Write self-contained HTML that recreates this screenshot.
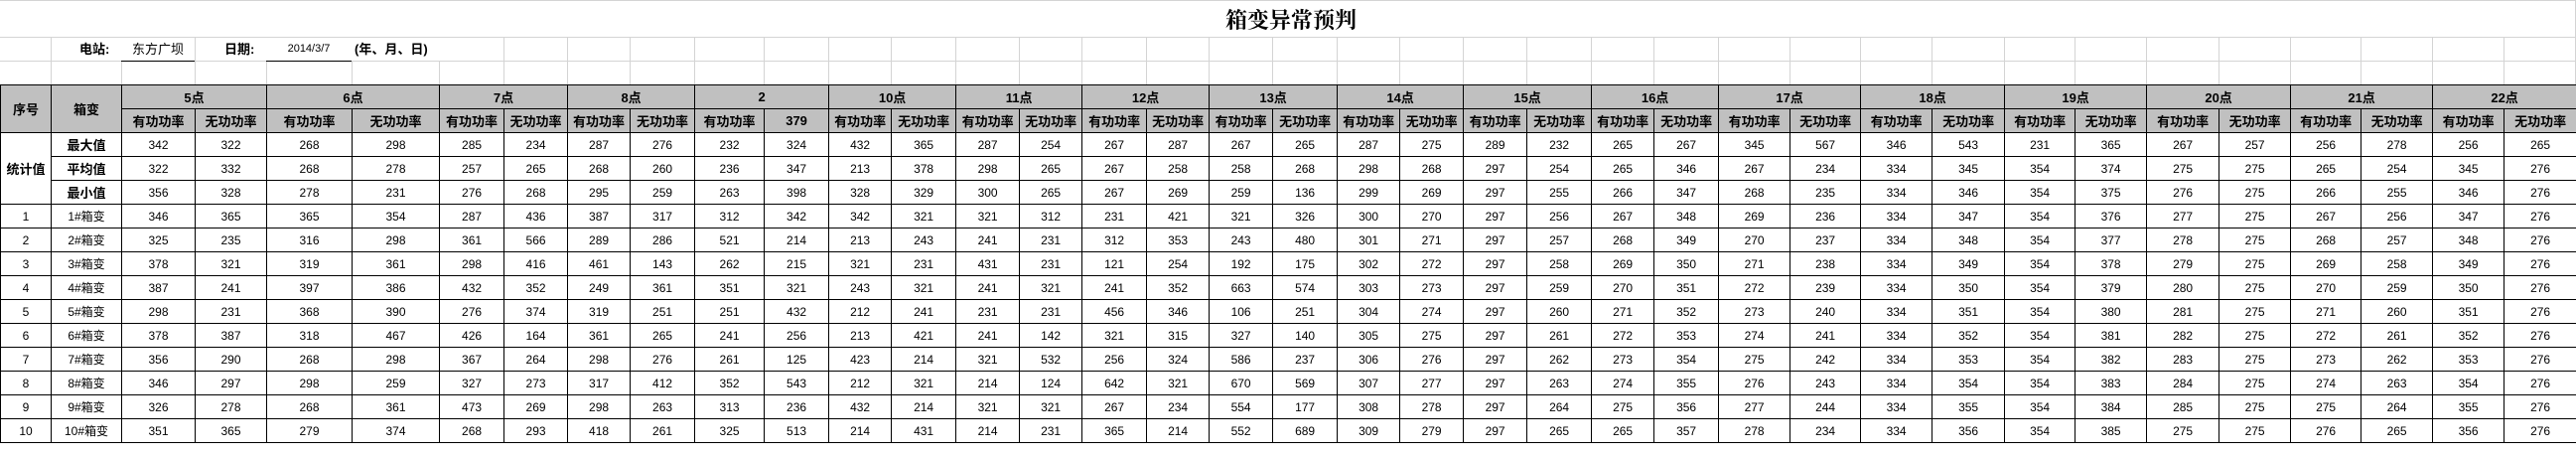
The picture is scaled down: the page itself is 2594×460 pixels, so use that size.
<!DOCTYPE html>
<html><head><meta charset="utf-8">
<style>
html,body{margin:0;padding:0;background:#fff;}
body{width:2594px;height:460px;position:relative;overflow:hidden;font-family:"Liberation Sans","Noto Sans CJK SC",sans-serif;}
.gl{position:absolute;background:#d4d4d4;}
.t{position:absolute;font-size:13px;line-height:24px;white-space:nowrap;}
table{position:absolute;left:0;top:85px;border-collapse:collapse;table-layout:fixed;width:2594px;}
td{border:1px solid #000;height:23px;padding:0;text-align:center;font-size:12px;color:#000;overflow:hidden;white-space:nowrap;}
thead td{background:#c0c0c0;font-weight:bold;font-size:13px;}
td.b{font-weight:bold;font-size:13px;}
</style></head><body>
<!-- title area gridlines -->
<div class="gl" style="left:0;top:0;width:2594px;height:1px"></div>
<div class="gl" style="left:0;top:37px;width:2594px;height:1px"></div>
<div class="gl" style="left:0;top:61px;width:2594px;height:1px"></div>
<div class="gl" style="left:2593px;top:0;width:1px;height:85px"></div>
<div style="position:absolute;left:1100px;width:400px;top:4px;text-align:center;font-size:22px;font-weight:bold;font-family:'Liberation Serif','Noto Serif CJK SC',serif;">箱变异常预判</div>
<!-- gridlines rows 2-3 -->
<div class="gl" style="left:51px;top:37px;width:1px;height:48px"></div>
<div class="gl" style="left:122px;top:61px;width:1px;height:24px"></div>
<div class="gl" style="left:196px;top:37px;width:1px;height:48px"></div>
<div class="gl" style="left:268px;top:61px;width:1px;height:24px"></div>
<div class="gl" style="left:354px;top:61px;width:1px;height:24px"></div>
<div class="gl" style="left:442px;top:61px;width:1px;height:24px"></div>
<div class="gl" style="left:507px;top:37px;width:1px;height:48px"></div>
<div class="gl" style="left:571px;top:37px;width:1px;height:48px"></div>
<div class="gl" style="left:634px;top:37px;width:1px;height:48px"></div>
<div class="gl" style="left:699px;top:37px;width:1px;height:48px"></div>
<div class="gl" style="left:769px;top:37px;width:1px;height:48px"></div>
<div class="gl" style="left:834px;top:37px;width:1px;height:48px"></div>
<div class="gl" style="left:897px;top:37px;width:1px;height:48px"></div>
<div class="gl" style="left:962px;top:37px;width:1px;height:48px"></div>
<div class="gl" style="left:1026px;top:37px;width:1px;height:48px"></div>
<div class="gl" style="left:1089px;top:37px;width:1px;height:48px"></div>
<div class="gl" style="left:1154px;top:37px;width:1px;height:48px"></div>
<div class="gl" style="left:1217px;top:37px;width:1px;height:48px"></div>
<div class="gl" style="left:1281px;top:37px;width:1px;height:48px"></div>
<div class="gl" style="left:1346px;top:37px;width:1px;height:48px"></div>
<div class="gl" style="left:1409px;top:37px;width:1px;height:48px"></div>
<div class="gl" style="left:1473px;top:37px;width:1px;height:48px"></div>
<div class="gl" style="left:1537px;top:37px;width:1px;height:48px"></div>
<div class="gl" style="left:1602px;top:37px;width:1px;height:48px"></div>
<div class="gl" style="left:1665px;top:37px;width:1px;height:48px"></div>
<div class="gl" style="left:1730px;top:37px;width:1px;height:48px"></div>
<div class="gl" style="left:1802px;top:37px;width:1px;height:48px"></div>
<div class="gl" style="left:1873px;top:37px;width:1px;height:48px"></div>
<div class="gl" style="left:1945px;top:37px;width:1px;height:48px"></div>
<div class="gl" style="left:2018px;top:37px;width:1px;height:48px"></div>
<div class="gl" style="left:2089px;top:37px;width:1px;height:48px"></div>
<div class="gl" style="left:2161px;top:37px;width:1px;height:48px"></div>
<div class="gl" style="left:2234px;top:37px;width:1px;height:48px"></div>
<div class="gl" style="left:2306px;top:37px;width:1px;height:48px"></div>
<div class="gl" style="left:2377px;top:37px;width:1px;height:48px"></div>
<div class="gl" style="left:2449px;top:37px;width:1px;height:48px"></div>
<div class="gl" style="left:2521px;top:37px;width:1px;height:48px"></div>
<!-- row 2 content -->
<div class="t" style="left:80px;top:38px;font-weight:bold;">电站:</div>
<div class="t" style="left:122px;top:38px;width:74px;text-align:center;border-bottom:1px solid #000;height:23px;line-height:23px;">东方广坝</div>
<div class="t" style="left:226px;top:38px;font-weight:bold;">日期:</div>
<div class="t" style="left:268px;top:38px;width:86px;text-align:center;border-bottom:1px solid #000;height:23px;line-height:23px;font-size:11px;">2014/3/7</div>
<div class="t" style="left:357px;top:38px;font-weight:bold;">(年、月、日)</div>

<table>
<colgroup>
<col style="width:51px"><col style="width:71px"><col style="width:74px"><col style="width:72px"><col style="width:86px"><col style="width:88px"><col style="width:65px"><col style="width:64px"><col style="width:63px"><col style="width:65px"><col style="width:70px"><col style="width:65px"><col style="width:63px"><col style="width:65px"><col style="width:64px"><col style="width:63px"><col style="width:65px"><col style="width:63px"><col style="width:64px"><col style="width:65px"><col style="width:63px"><col style="width:64px"><col style="width:64px"><col style="width:65px"><col style="width:63px"><col style="width:65px"><col style="width:72px"><col style="width:71px"><col style="width:72px"><col style="width:73px"><col style="width:71px"><col style="width:72px"><col style="width:73px"><col style="width:72px"><col style="width:71px"><col style="width:72px"><col style="width:72px"><col style="width:73px">
</colgroup>
<thead>
<tr><td rowspan="2">序号</td><td rowspan="2">箱变</td><td colspan="2">5点</td><td colspan="2">6点</td><td colspan="2">7点</td><td colspan="2">8点</td><td colspan="2">2</td><td colspan="2">10点</td><td colspan="2">11点</td><td colspan="2">12点</td><td colspan="2">13点</td><td colspan="2">14点</td><td colspan="2">15点</td><td colspan="2">16点</td><td colspan="2">17点</td><td colspan="2">18点</td><td colspan="2">19点</td><td colspan="2">20点</td><td colspan="2">21点</td><td colspan="2">22点</td></tr>
<tr><td>有功功率</td><td>无功功率</td><td>有功功率</td><td>无功功率</td><td>有功功率</td><td>无功功率</td><td>有功功率</td><td>无功功率</td><td>有功功率</td><td>379</td><td>有功功率</td><td>无功功率</td><td>有功功率</td><td>无功功率</td><td>有功功率</td><td>无功功率</td><td>有功功率</td><td>无功功率</td><td>有功功率</td><td>无功功率</td><td>有功功率</td><td>无功功率</td><td>有功功率</td><td>无功功率</td><td>有功功率</td><td>无功功率</td><td>有功功率</td><td>无功功率</td><td>有功功率</td><td>无功功率</td><td>有功功率</td><td>无功功率</td><td>有功功率</td><td>无功功率</td><td>有功功率</td><td>无功功率</td></tr>
</thead>
<tbody>
<tr><td rowspan="3" class="b">统计值</td><td class="b">最大值</td><td>342</td><td>322</td><td>268</td><td>298</td><td>285</td><td>234</td><td>287</td><td>276</td><td>232</td><td>324</td><td>432</td><td>365</td><td>287</td><td>254</td><td>267</td><td>287</td><td>267</td><td>265</td><td>287</td><td>275</td><td>289</td><td>232</td><td>265</td><td>267</td><td>345</td><td>567</td><td>346</td><td>543</td><td>231</td><td>365</td><td>267</td><td>257</td><td>256</td><td>278</td><td>256</td><td>265</td></tr>
<tr><td class="b">平均值</td><td>322</td><td>332</td><td>268</td><td>278</td><td>257</td><td>265</td><td>268</td><td>260</td><td>236</td><td>347</td><td>213</td><td>378</td><td>298</td><td>265</td><td>267</td><td>258</td><td>258</td><td>268</td><td>298</td><td>268</td><td>297</td><td>254</td><td>265</td><td>346</td><td>267</td><td>234</td><td>334</td><td>345</td><td>354</td><td>374</td><td>275</td><td>275</td><td>265</td><td>254</td><td>345</td><td>276</td></tr>
<tr><td class="b">最小值</td><td>356</td><td>328</td><td>278</td><td>231</td><td>276</td><td>268</td><td>295</td><td>259</td><td>263</td><td>398</td><td>328</td><td>329</td><td>300</td><td>265</td><td>267</td><td>269</td><td>259</td><td>136</td><td>299</td><td>269</td><td>297</td><td>255</td><td>266</td><td>347</td><td>268</td><td>235</td><td>334</td><td>346</td><td>354</td><td>375</td><td>276</td><td>275</td><td>266</td><td>255</td><td>346</td><td>276</td></tr>
<tr><td>1</td><td>1#箱变</td><td>346</td><td>365</td><td>365</td><td>354</td><td>287</td><td>436</td><td>387</td><td>317</td><td>312</td><td>342</td><td>342</td><td>321</td><td>321</td><td>312</td><td>231</td><td>421</td><td>321</td><td>326</td><td>300</td><td>270</td><td>297</td><td>256</td><td>267</td><td>348</td><td>269</td><td>236</td><td>334</td><td>347</td><td>354</td><td>376</td><td>277</td><td>275</td><td>267</td><td>256</td><td>347</td><td>276</td></tr>
<tr><td>2</td><td>2#箱变</td><td>325</td><td>235</td><td>316</td><td>298</td><td>361</td><td>566</td><td>289</td><td>286</td><td>521</td><td>214</td><td>213</td><td>243</td><td>241</td><td>231</td><td>312</td><td>353</td><td>243</td><td>480</td><td>301</td><td>271</td><td>297</td><td>257</td><td>268</td><td>349</td><td>270</td><td>237</td><td>334</td><td>348</td><td>354</td><td>377</td><td>278</td><td>275</td><td>268</td><td>257</td><td>348</td><td>276</td></tr>
<tr><td>3</td><td>3#箱变</td><td>378</td><td>321</td><td>319</td><td>361</td><td>298</td><td>416</td><td>461</td><td>143</td><td>262</td><td>215</td><td>321</td><td>231</td><td>431</td><td>231</td><td>121</td><td>254</td><td>192</td><td>175</td><td>302</td><td>272</td><td>297</td><td>258</td><td>269</td><td>350</td><td>271</td><td>238</td><td>334</td><td>349</td><td>354</td><td>378</td><td>279</td><td>275</td><td>269</td><td>258</td><td>349</td><td>276</td></tr>
<tr><td>4</td><td>4#箱变</td><td>387</td><td>241</td><td>397</td><td>386</td><td>432</td><td>352</td><td>249</td><td>361</td><td>351</td><td>321</td><td>243</td><td>321</td><td>241</td><td>321</td><td>241</td><td>352</td><td>663</td><td>574</td><td>303</td><td>273</td><td>297</td><td>259</td><td>270</td><td>351</td><td>272</td><td>239</td><td>334</td><td>350</td><td>354</td><td>379</td><td>280</td><td>275</td><td>270</td><td>259</td><td>350</td><td>276</td></tr>
<tr><td>5</td><td>5#箱变</td><td>298</td><td>231</td><td>368</td><td>390</td><td>276</td><td>374</td><td>319</td><td>251</td><td>251</td><td>432</td><td>212</td><td>241</td><td>231</td><td>231</td><td>456</td><td>346</td><td>106</td><td>251</td><td>304</td><td>274</td><td>297</td><td>260</td><td>271</td><td>352</td><td>273</td><td>240</td><td>334</td><td>351</td><td>354</td><td>380</td><td>281</td><td>275</td><td>271</td><td>260</td><td>351</td><td>276</td></tr>
<tr><td>6</td><td>6#箱变</td><td>378</td><td>387</td><td>318</td><td>467</td><td>426</td><td>164</td><td>361</td><td>265</td><td>241</td><td>256</td><td>213</td><td>421</td><td>241</td><td>142</td><td>321</td><td>315</td><td>327</td><td>140</td><td>305</td><td>275</td><td>297</td><td>261</td><td>272</td><td>353</td><td>274</td><td>241</td><td>334</td><td>352</td><td>354</td><td>381</td><td>282</td><td>275</td><td>272</td><td>261</td><td>352</td><td>276</td></tr>
<tr><td>7</td><td>7#箱变</td><td>356</td><td>290</td><td>268</td><td>298</td><td>367</td><td>264</td><td>298</td><td>276</td><td>261</td><td>125</td><td>423</td><td>214</td><td>321</td><td>532</td><td>256</td><td>324</td><td>586</td><td>237</td><td>306</td><td>276</td><td>297</td><td>262</td><td>273</td><td>354</td><td>275</td><td>242</td><td>334</td><td>353</td><td>354</td><td>382</td><td>283</td><td>275</td><td>273</td><td>262</td><td>353</td><td>276</td></tr>
<tr><td>8</td><td>8#箱变</td><td>346</td><td>297</td><td>298</td><td>259</td><td>327</td><td>273</td><td>317</td><td>412</td><td>352</td><td>543</td><td>212</td><td>321</td><td>214</td><td>124</td><td>642</td><td>321</td><td>670</td><td>569</td><td>307</td><td>277</td><td>297</td><td>263</td><td>274</td><td>355</td><td>276</td><td>243</td><td>334</td><td>354</td><td>354</td><td>383</td><td>284</td><td>275</td><td>274</td><td>263</td><td>354</td><td>276</td></tr>
<tr><td>9</td><td>9#箱变</td><td>326</td><td>278</td><td>268</td><td>361</td><td>473</td><td>269</td><td>298</td><td>263</td><td>313</td><td>236</td><td>432</td><td>214</td><td>321</td><td>321</td><td>267</td><td>234</td><td>554</td><td>177</td><td>308</td><td>278</td><td>297</td><td>264</td><td>275</td><td>356</td><td>277</td><td>244</td><td>334</td><td>355</td><td>354</td><td>384</td><td>285</td><td>275</td><td>275</td><td>264</td><td>355</td><td>276</td></tr>
<tr><td>10</td><td>10#箱变</td><td>351</td><td>365</td><td>279</td><td>374</td><td>268</td><td>293</td><td>418</td><td>261</td><td>325</td><td>513</td><td>214</td><td>431</td><td>214</td><td>231</td><td>365</td><td>214</td><td>552</td><td>689</td><td>309</td><td>279</td><td>297</td><td>265</td><td>265</td><td>357</td><td>278</td><td>234</td><td>334</td><td>356</td><td>354</td><td>385</td><td>275</td><td>275</td><td>276</td><td>265</td><td>356</td><td>276</td></tr>
</tbody>
</table>
</body></html>
